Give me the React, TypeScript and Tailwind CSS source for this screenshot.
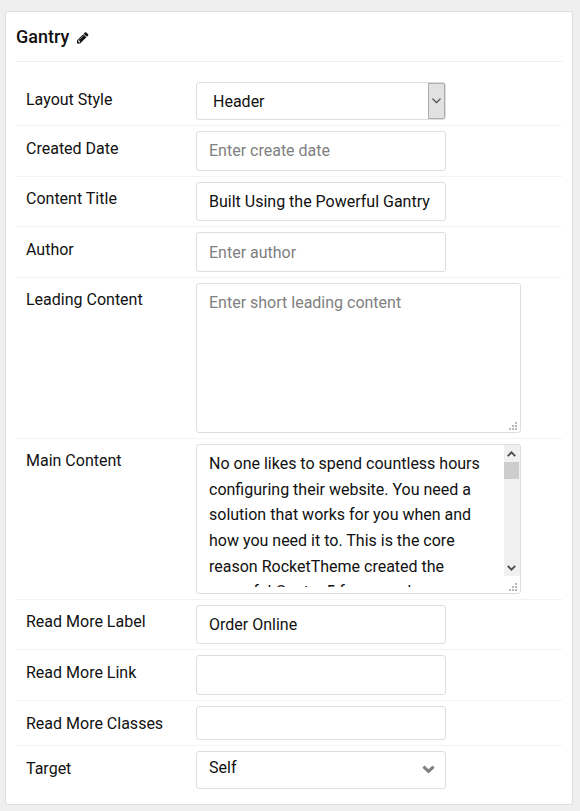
import type { ReactNode } from "react";

type RowProps = {
  label: string;
  labelPad?: string;
  last?: boolean;
  children: ReactNode;
};

function Row({ label, labelPad = "pt-[10px]", last = false, children }: RowProps) {
  return (
    <div className={`flex py-[5px] ${last ? "" : "border-b border-[#f3f3f3]"}`}>
      <div className={`-mt-[5px] w-[180px] shrink-0 pl-[10px] leading-6 ${labelPad}`}>
        <div className="-mb-6">{label}</div>
      </div>
      {children}
    </div>
  );
}

type BoxProps = { className: string; children?: ReactNode };

function Box({ className, children }: BoxProps) {
  return (
    <div className={`flex overflow-hidden rounded-[3px] border border-[#dddddd] bg-white ${className}`}>
      {children}
    </div>
  );
}

function Grip() {
  return (
    <svg width="8" height="8" viewBox="0 0 8 8" fill="#b8b8b8" shapeRendering="crispEdges">
      <path d="M6 0h2v2H6zM3 3h2v2H3zM6 3h2v2H6zM0 6h2v2H0zM3 6h2v2H3zM6 6h2v2H6z" />
    </svg>
  );
}

const mainLines = [
  { text: "No one likes to spend countless hours", height: "h-[26px]" },
  { text: "configuring their website. You need a", height: "h-[25px]" },
  { text: "solution that works for you when and", height: "h-[26px]" },
  { text: "how you need it to. This is the core", height: "h-[26px]" },
  { text: "reason RocketTheme created the", height: "h-[25px]" },
  { text: "powerful Gantry 5 framework.", height: "h-[26px]" },
];

export default function App() {
  return (
    <div className="h-[811px] w-[580px] bg-[#efefef] pt-[11px] pl-[5px] font-['Roboto',sans-serif] text-[16px] text-[#111111]">
      <div className="h-[794px] w-[568px] rounded-[3px] border border-[#dddddd] bg-white px-[10px]">
        <header className="mb-[15px] flex h-[50px] items-start border-b border-[#eeeeee] pt-[13px]">
          <h1 className="text-[18px] leading-6 font-medium">Gantry</h1>
          <svg className="mt-[7px] ml-[8px]" width="11.5" height="11.5" viewBox="0 0 1536 1536" fill="#111111">
            <path d="M363 1408l91-91-235-235-91 91v107h128v128h107zm523-928q0-22-22-22-10 0-17 7l-542 542q-7 7-7 17 0 22 22 22 10 0 17-7l542-542q7-7 7-17zm-54-192l416 416-832 832H0v-416zm683 96q0 53-37 90l-166 166-416-416 166-165q36-38 90-38 53 0 91 38l235 234q37 39 37 91z" />
          </svg>
        </header>

        <Row label="Layout Style" labelPad="pt-[11px]">
          <Box className="h-[38px] w-[250px] justify-between pl-4">
            <span className="pt-[7px] leading-6">Header</span>
            <span className="flex h-[36px] w-[17px] items-center border border-[#adadad] bg-[#e1e1e1] pl-[2.5px]">
              <svg width="9" height="6" viewBox="0 0 9 6" fill="none" stroke="#444444" strokeWidth="1.2">
                <path d="M.5.7l4 4 4-4" />
              </svg>
            </span>
          </Box>
        </Row>
        <Row label="Created Date" labelPad="pt-[11px]">
          <Box className="h-[40px] w-[250px] pt-[7px] pl-3 leading-6 text-[#808080]">Enter create date</Box>
        </Row>
        <Row label="Content Title">
          <Box className="h-[39px] w-[250px] pt-[7px] pl-3 leading-6">Built Using the Powerful Gantry</Box>
        </Row>
        <Row label="Author" labelPad="pt-[11px]">
          <Box className="h-[40px] w-[250px] pt-[8px] pl-3 leading-6 text-[#808080]">Enter author</Box>
        </Row>
        <Row label="Leading Content">
          <Box className="h-[150px] w-[325px] justify-between pt-[7px] pr-[3px] pb-[2px] pl-3 leading-6 text-[#808080]">
            <span>Enter short leading content</span>
            <span className="self-end">
              <Grip />
            </span>
          </Box>
        </Row>
        <Row label="Main Content">
          <Box className="h-[150px] w-[325px] justify-between pl-3">
            <div className="h-[142px] overflow-hidden pt-[7px] leading-6 whitespace-nowrap">
              {mainLines.map((line) => (
                <div key={line.text} className={line.height}>
                  {line.text}
                </div>
              ))}
            </div>
            <div className="flex w-[16px] flex-col">
              <div className="flex h-[131px] flex-col items-start bg-[#f0f0f0]">
                <svg className="mt-[6px] mb-[5px] ml-[3px]" width="9" height="6" viewBox="0 0 9 6" fill="none" stroke="#505050" strokeWidth="2">
                  <path d="M.8 5.1l3.7-3.7 3.7 3.7" />
                </svg>
                <div className="h-[17px] w-[15px] bg-[#cdcdcd]" />
                <svg className="mt-auto mb-[5px] ml-[3px]" width="9" height="6" viewBox="0 0 9 6" fill="none" stroke="#505050" strokeWidth="2">
                  <path d="M.8.9l3.7 3.7 3.7-3.7" />
                </svg>
              </div>
              <div className="mt-[7px] ml-[5px]">
                <Grip />
              </div>
            </div>
          </Box>
        </Row>
        <Row label="Read More Label">
          <Box className="h-[39px] w-[250px] pt-[7px] pl-3 leading-6">Order Online</Box>
        </Row>
        <Row label="Read More Link" labelPad="pt-[11px]">
          <Box className="h-[40px] w-[250px]" />
        </Row>
        <Row label="Read More Classes" labelPad="pt-[11px]">
          <Box className="h-[34px] w-[250px]" />
        </Row>
        <Row label="Target" labelPad="pt-[11px]" last>
          <Box className="h-[38px] w-[250px] justify-between pr-[10px] pl-3">
            <span className="pt-[4px] leading-6">Self</span>
            <svg className="mt-[13px]" width="13" height="9" viewBox="0 0 13 9" fill="none" stroke="#808080" strokeWidth="3">
              <path d="M1.4 1.6l5.1 4.8 5.1-4.8" />
            </svg>
          </Box>
        </Row>
      </div>
    </div>
  );
}
